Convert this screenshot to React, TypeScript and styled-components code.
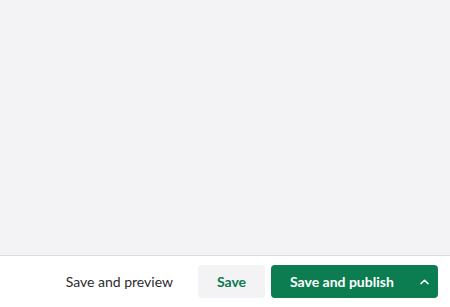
import styled, { createGlobalStyle } from 'styled-components';

const GlobalStyle = createGlobalStyle`
  html, body {
    margin: 0;
    padding: 0;
    height: 100%;
    font-family: Lato, "Liberation Sans", sans-serif;
  }
  #root {
    height: 100%;
  }
`;

const Page = styled.div`
  display: flex;
  flex-direction: column;
  height: 307px;
  width: 450px;
  background-color: #f3f3f5;
`;

const Content = styled.div`
  flex: 1;
`;

const Footer = styled.div`
  display: flex;
  flex-direction: row;
  align-items: center;
  justify-content: flex-end;
  height: 51px;
  padding-right: 12px;
  background-color: #ffffff;
  border-top: 1px solid #dcdcde;
  gap: 6px;
`;

const TextButton = styled.button`
  font-family: Lato, "Liberation Sans", sans-serif;
  font-size: 14px;
  color: #2b2b2f;
  background: none;
  border: none;
  padding: 0 19px;
  height: 33px;
  cursor: pointer;
`;

const SecondaryButton = styled.button`
  font-family: Lato, "Liberation Sans", sans-serif;
  font-size: 14px;
  font-weight: bold;
  color: #0b7a4f;
  background-color: #f3f3f5;
  border: none;
  border-radius: 4px;
  width: 67px;
  height: 33px;
  cursor: pointer;
`;

const SplitButton = styled.div`
  display: flex;
  flex-direction: row;
  align-items: center;
  height: 33px;
  width: 167px;
  border-radius: 4px;
  background-color: #0b7d51;
  color: #ffffff;
`;

const PrimaryButton = styled.button`
  font-family: Lato, "Liberation Sans", sans-serif;
  font-size: 14px;
  font-weight: bold;
  color: #ffffff;
  background: none;
  border: none;
  padding: 0 0 0 19px;
  height: 100%;
  flex: 1;
  text-align: left;
  cursor: pointer;
`;

const MenuToggle = styled.button`
  display: flex;
  align-items: center;
  justify-content: center;
  width: 28px;
  height: 100%;
  background: none;
  border: none;
  padding: 0;
  color: #ffffff;
  cursor: pointer;
`;

const App = () => {
  return (
    <>
      <GlobalStyle />
      <Page>
        <Content />
        <Footer>
          <TextButton>Save and preview</TextButton>
          <SecondaryButton>Save</SecondaryButton>
          <SplitButton>
            <PrimaryButton>Save and publish</PrimaryButton>
            <MenuToggle aria-label="More options">
              <svg width="9" height="6" viewBox="0 0 9 6" fill="none">
                <path d="M1 4.6L4.5 1.3L8 4.6" stroke="currentColor" strokeWidth="1.5" strokeLinecap="round" strokeLinejoin="round" />
              </svg>
            </MenuToggle>
          </SplitButton>
        </Footer>
      </Page>
    </>
  );
};

export default App;
